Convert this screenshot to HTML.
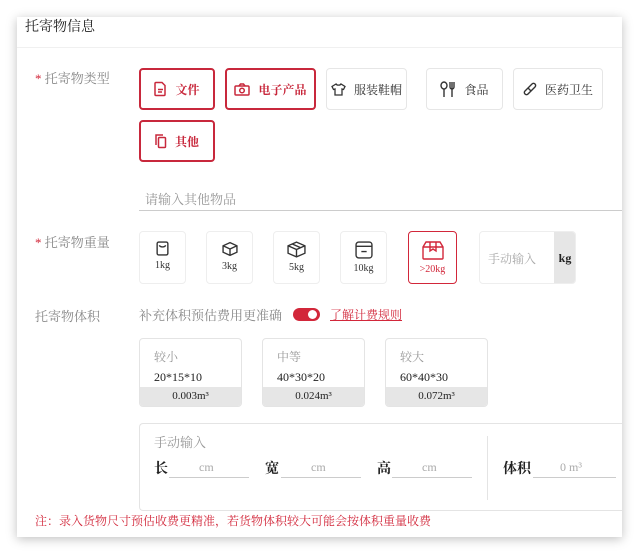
<!DOCTYPE html><html><head><meta charset="utf-8"><style>
*{margin:0;padding:0;box-sizing:border-box}
body{width:640px;height:553px;background:#fff;position:relative;overflow:hidden;font-family:"Liberation Serif","Noto Serif CJK SC",serif;color:#222}
.card{position:absolute;left:17px;top:17px;width:605px;height:520px;background:#fff;box-shadow:0 2px 10px rgba(0,0,0,.25)}
.a{position:absolute}
.lbl{font-size:13px;color:#888}
.star{color:#d2273a}
.btn{position:absolute;height:42px;border:1px solid #e6e6e6;border-radius:4px;display:flex;align-items:center;justify-content:center;font-size:12px;gap:8px;color:#333}
.sel{border:2px solid #c8283c;color:#c8283c;font-weight:bold}
.w{position:absolute;top:231px;width:47px;height:53px;border:1px solid #eee;border-radius:4px;font-size:10px;text-align:center;color:#333}
.w svg{display:block;margin:9px auto 4px}
.sz{position:absolute;top:338px;width:103px;height:69px;border:1px solid #e4e4e4;border-radius:4px;overflow:hidden;font-size:12px}
.sz .t{position:absolute;left:14px;top:9px;color:#999}
.sz .d{position:absolute;left:14px;top:31px;color:#222}
.sz .b{position:absolute;left:0;right:0;bottom:0;height:19px;background:#e6e6e6;text-align:center;line-height:19px;font-size:11px}
.ul{position:absolute;border-bottom:1px solid #ccc;height:1px}
.cm{position:absolute;color:#aaa;font-size:12px}
</style></head><body>
<div class="card"></div>
<div class="a" style="left:25px;top:16px;font-size:14px;color:#222">托寄物信息</div>
<div class="a" style="left:17px;top:47px;width:605px;border-top:1px solid #f0f0f0"></div>
<div class="a lbl" style="left:35px;top:68px"><span class="star">* </span>托寄物类型</div>
<div class="btn sel" style="left:139px;top:68px;width:76px"><svg width="13" height="16" viewBox="0 0 13 15" fill="none" stroke="#c8283c" stroke-width="1.5"><path d="M2 1h6l3 3v9a1 1 0 0 1-1 1H2a1 1 0 0 1-1-1V2a1 1 0 0 1 1-1z"/><path d="M4 8h5M4 10.5h4"/></svg>文件</div>
<div class="btn sel" style="left:225px;top:68px;width:91px"><svg width="16" height="13" viewBox="0 0 16 13" fill="none" stroke="#c8283c" stroke-width="1.5"><rect x="1" y="3" width="14" height="9" rx="1"/><path d="M5 3l1.5-2h3L11 3"/><circle cx="8" cy="7.5" r="2.3"/></svg>电子产品</div>
<div class="btn" style="left:326px;top:68px;width:81px"><svg width="15" height="13" viewBox="0 0 15 13" fill="none" stroke="#333" stroke-width="1.3"><path d="M5 1L1 3.5l1.5 3L4 6v6h7V6l1.5.5 1.5-3L10 1c-.5 1.5-4.5 1.5-5 0z"/></svg>服装鞋帽</div>
<div class="btn" style="left:426px;top:68px;width:77px"><svg width="16" height="17" viewBox="0 0 16 17" fill="none" stroke="#333" stroke-width="1.4"><ellipse cx="4" cy="4.5" rx="3" ry="3.5"/><path d="M4 8v8M10 1v5a2 2 0 0 0 4 0V1M12 1v15"/></svg>食品</div>
<div class="btn" style="left:513px;top:68px;width:90px"><svg width="14" height="14" viewBox="0 0 14 14" fill="none" stroke="#333" stroke-width="1.4"><path d="M2 12a2 2 0 0 1 0-3l7-7a2 2 0 0 1 3 3l-7 7a2 2 0 0 1-3 0zM5 6l3 3"/></svg>医药卫生</div>
<div class="btn sel" style="left:139px;top:120px;width:76px"><svg width="12" height="15" viewBox="0 0 12 15" fill="none" stroke="#c8283c" stroke-width="1.5"><path d="M1 11V1h7"/><rect x="3.5" y="3.5" width="7" height="10" rx="1"/></svg>其他</div>
<div class="a" style="left:145px;top:189px;font-size:13px;color:#999">请输入其他物品</div>
<div class="ul" style="left:139px;top:210px;width:483px"></div>
<div class="a lbl" style="left:35px;top:232px"><span class="star">* </span>托寄物重量</div>
<div class="w" style="left:139px"><svg width="13" height="15" viewBox="0 0 12 14" fill="none" stroke="#333" stroke-width="1.3"><rect x="1" y="1" width="10" height="12" rx="1.5"/><path d="M3 4c1 2 5 2 6 0"/></svg>1kg</div>
<div class="w" style="left:206px"><svg width="16" height="16" viewBox="0 0 15 14" fill="none" stroke="#333" stroke-width="1.3"><path d="M7.5 1L14 4v6l-6.5 3L1 10V4zM1 4l6.5 3L14 4M7.5 7v6"/></svg>3kg</div>
<div class="w" style="left:273px"><svg width="19" height="17" viewBox="0 0 18 16" fill="none" stroke="#333" stroke-width="1.3"><path d="M9 1l8 3.5v7L9 15 1 11.5v-7zM1 4.5L9 8l8-3.5M9 8v7M5 2.8l8 3.5"/></svg>5kg</div>
<div class="w" style="left:340px"><svg width="18" height="18" viewBox="0 0 17 17" fill="none" stroke="#333" stroke-width="1.3"><rect x="1" y="1" width="15" height="15" rx="2.5"/><path d="M1 5h15M6 10h5"/></svg>10kg</div>
<div class="w" style="left:408px;width:49px;border:1.5px solid #d2273a;color:#d2273a"><svg width="22" height="19" viewBox="0 0 22 19" fill="none" stroke="#d2273a" stroke-width="1.4"><path d="M1 6l3-5h14l3 5v11a1 1 0 0 1-1 1H2a1 1 0 0 1-1-1zM1 6h20M8 1v9l3-2 3 2V1"/></svg>&gt;20kg</div>
<div class="a" style="left:479px;top:231px;width:97px;height:53px;border:1px solid #eee;border-radius:4px;overflow:hidden"><div class="a" style="left:8px;top:18px;font-size:12px;color:#aaa">手动输入</div><div class="a" style="left:74px;top:0;width:22px;height:53px;background:#e6e6e6;font-size:12px;font-weight:bold;line-height:53px;text-align:center">kg</div></div>
<div class="a lbl" style="left:35px;top:306px">托寄物体积</div>
<div class="a" style="left:139px;top:305px;font-size:13px;color:#888">补充体积预估费用更准确</div>
<div class="a" style="left:293px;top:308px;width:27px;height:13px;border-radius:7px;background:#d2273a"><div class="a" style="left:15px;top:2px;width:9px;height:9px;border-radius:50%;background:#fff"></div></div>
<div class="a" style="left:330px;top:306px;font-size:12px;color:#d2273a;text-decoration:underline">了解计费规则</div>
<div class="sz" style="left:139px"><div class="t">较小</div><div class="d">20*15*10</div><div class="b">0.003m³</div></div>
<div class="sz" style="left:262px"><div class="t">中等</div><div class="d">40*30*20</div><div class="b">0.024m³</div></div>
<div class="sz" style="left:385px"><div class="t">较大</div><div class="d">60*40*30</div><div class="b">0.072m³</div></div>
<div class="a" style="left:139px;top:423px;width:483px;height:88px;border:1px solid #e4e4e4;border-right:none;border-radius:4px 0 0 4px"></div>
<div class="a" style="left:154px;top:432px;font-size:13px;color:#999">手动输入</div>
<div class="a" style="left:154px;top:458px;font-size:14px;font-weight:bold">长</div><div class="ul" style="left:169px;top:477px;width:80px"></div><div class="cm" style="left:199px;top:460px">cm</div>
<div class="a" style="left:265px;top:458px;font-size:14px;font-weight:bold">宽</div><div class="ul" style="left:281px;top:477px;width:80px"></div><div class="cm" style="left:311px;top:460px">cm</div>
<div class="a" style="left:377px;top:458px;font-size:14px;font-weight:bold">高</div><div class="ul" style="left:392px;top:477px;width:80px"></div><div class="cm" style="left:422px;top:460px">cm</div>
<div class="a" style="left:487px;top:436px;height:64px;border-left:1px solid #e4e4e4"></div>
<div class="a" style="left:503px;top:458px;font-size:14px;font-weight:bold">体积</div><div class="ul" style="left:533px;top:477px;width:83px"></div><div class="cm" style="left:560px;top:460px">0 m³</div>
<div class="a" style="left:35px;top:512px;font-size:12px;color:#d2273a">注：录入货物尺寸预估收费更精准，若货物体积较大可能会按体积重量收费</div>
</body></html>
